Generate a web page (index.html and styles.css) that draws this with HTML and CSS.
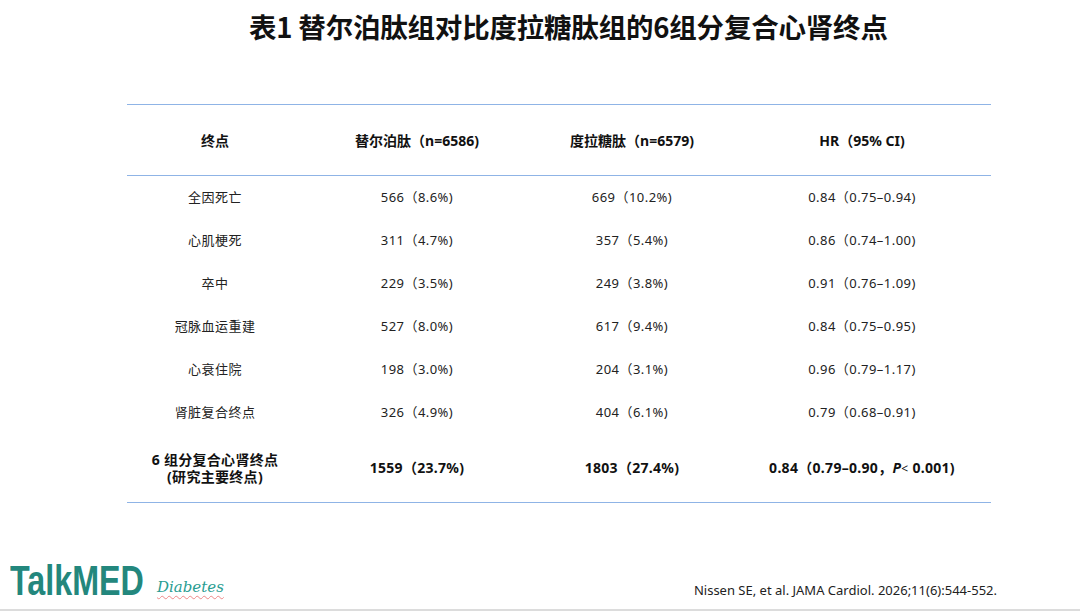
FILE: index.html
```html
<!DOCTYPE html>
<html lang="zh">
<head>
<meta charset="utf-8">
<link rel="stylesheet" href="styles.css">
</head>
<body>
<div class="page">
  <h1 class="title">表1 替尔泊肽组对比度拉糖肽组的6组分复合心肾终点</h1>
  <table class="tbl">
    <colgroup>
      <col class="c1"><col class="c2"><col class="c3"><col class="c4">
    </colgroup>
    <thead>
      <tr class="head">
        <th>终点</th>
        <th>替尔泊肽（n=6586)</th>
        <th>度拉糖肽（n=6579)</th>
        <th>HR（95% CI)</th>
      </tr>
    </thead>
    <tbody>
      <tr><td>全因死亡</td><td>566（8.6%)</td><td>669（10.2%)</td><td>0.84（0.75–0.94)</td></tr>
      <tr><td>心肌梗死</td><td>311（4.7%)</td><td>357（5.4%)</td><td>0.86（0.74–1.00)</td></tr>
      <tr><td>卒中</td><td>229（3.5%)</td><td>249（3.8%)</td><td>0.91（0.76–1.09)</td></tr>
      <tr><td>冠脉血运重建</td><td>527（8.0%)</td><td>617（9.4%)</td><td>0.84（0.75–0.95)</td></tr>
      <tr><td>心衰住院</td><td>198（3.0%)</td><td>204（3.1%)</td><td>0.96（0.79–1.17)</td></tr>
      <tr><td>肾脏复合终点</td><td>326（4.9%)</td><td>404（6.1%)</td><td>0.79（0.68–0.91)</td></tr>
      <tr class="total">
        <td>6 组分复合心肾终点<br>(研究主要终点)</td>
        <td>1559（23.7%)</td>
        <td>1803（27.4%)</td>
        <td>0.84（0.79–0.90，<i>P</i><span class="lt">&lt;</span> 0.001)</td>
      </tr>
    </tbody>
  </table>
  <footer class="foot">
    <div class="logo">
      <span class="brand-box"><span class="brand">TalkMED</span></span>
      <span class="sub">Diabetes</span>
    </div>
    <div class="cite">Nissen SE, et al. JAMA Cardiol. 2026;11(6):544-552.</div>
  </footer>
</div>
</body>
</html>
```
FILE: styles.css
```css
* { box-sizing: border-box; }
html, body { margin: 0; padding: 0; background: #fff; }
body {
  font-family: "Noto Sans", "Noto Sans CJK SC", sans-serif;
  color: #1a1a1a;
}
.page {
  width: 1080px;
  height: 611px;
  position: relative;
  display: flex;
  flex-direction: column;
  align-items: flex-start;
  border-bottom: 2px solid #dcdcdc;
}
.title {
  margin: 8px 0 0 249px;
  font-family: "Noto Sans CJK SC", sans-serif;
  font-size: 27.5px;
  line-height: 36px;
  font-weight: 700;
  color: #111;
  letter-spacing: -0.2px;
}
.tbl {
  margin: 60px 0 0 127px;
  width: 864px;
  border-collapse: collapse;
  table-layout: fixed;
  font-size: 13px;
}
.c1 { width: 176px; }
.c2 { width: 228px; }
.c3 { width: 202px; }
.c4 { width: 258px; }
.tbl th, .tbl td {
  text-align: center;
  padding: 0;
  font-family: "Noto Sans", "Noto Sans CJK SC", sans-serif;
}
.head th {
  height: 71px;
  font-size: 14px;
  font-weight: 700;
  color: #111;
  border-top: 1.5px solid #8fb4e6;
  border-bottom: 1.5px solid #8fb4e6;
}
.tbl td { height: 43px; color: #222; letter-spacing: 0.45px; padding-bottom: 1px; }
.total td {
  height: 69px;
  font-size: 14px;
  font-weight: 700;
  color: #111;
  line-height: 17px;
  letter-spacing: 0.3px;
  padding-bottom: 0;
  border-bottom: 1.5px solid #8fb4e6;
}
.total i { font-style: italic; }
.lt { font-weight: 400; font-size: 12px; }
.foot {
  position: absolute;
  left: 0; right: 0; bottom: 0;
  height: 52px;
  display: flex;
  justify-content: space-between;
  align-items: flex-end;
  padding: 0 83px 12px 10px;
}
.logo { display: flex; align-items: flex-end; gap: 12px; }
.brand-box {
  display: block;
  width: 135px;
  height: 36px;
  position: relative;
  top: 1px;
}
.brand {
  display: inline-block;
  font-family: "Liberation Sans", Arial, sans-serif;
  font-weight: 700;
  font-size: 43px;
  line-height: 36px;
  color: #23877d;
  white-space: nowrap;
  transform: scaleX(0.75);
  transform-origin: left bottom;
}
.sub {
  font-family: "DejaVu Serif", serif;
  font-style: italic;
  font-size: 15px;
  color: #2a9d92;
  text-decoration: underline wavy #e88;
  text-decoration-thickness: 1px;
  text-underline-offset: 3px;
  margin-bottom: 1px;
}
.cite {
  font-size: 13px;
  color: #222;
  margin-bottom: -2px;
}
```
